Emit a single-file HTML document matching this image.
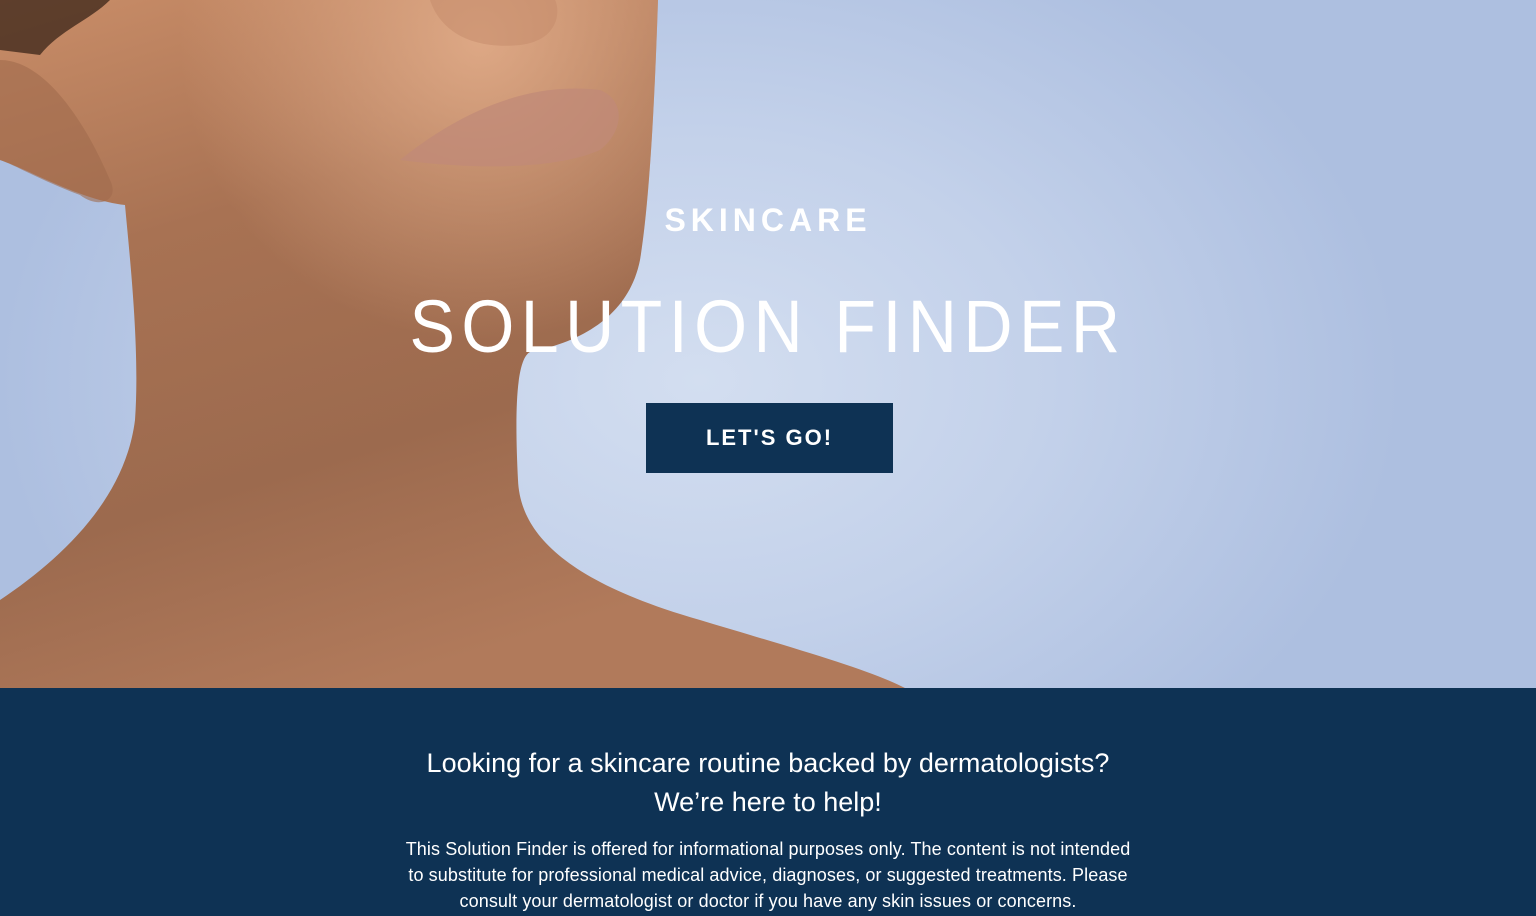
<!DOCTYPE html>
<html><head><meta charset="utf-8"><style>
html,body{margin:0;padding:0;width:1536px;height:916px;overflow:hidden;font-family:"Liberation Sans",sans-serif}
.hero{position:absolute;left:0;top:0;width:1536px;height:688px;background:radial-gradient(ellipse 700px 500px at 700px 380px,#d3def0 0%,#c3d1ea 50%,#adbfe0 100%)}
svg{position:absolute;left:0;top:0}
.t{position:absolute;left:0;width:1536px;text-align:center;color:#fff;white-space:nowrap}
.btn{position:absolute;left:646px;top:403px;width:247px;height:70px;background:#0e3254;color:#fff;font-weight:bold;font-size:22px;letter-spacing:2px;text-align:center;line-height:70px}
.band{position:absolute;left:0;top:688px;width:1536px;height:228px;background:#0e3254}
</style></head><body>
<div class="hero"></div>
<svg width="1536" height="688" viewBox="0 0 1536 688">
<defs>
<linearGradient id="sk" x1="0" y1="0" x2="0.4" y2="1">
<stop offset="0" stop-color="#c98d68"/><stop offset="0.35" stop-color="#a87253"/><stop offset="0.7" stop-color="#9c6a4e"/><stop offset="1" stop-color="#b17a5b"/></linearGradient>
<radialGradient id="hl" cx="480" cy="40" r="300" gradientUnits="userSpaceOnUse"><stop offset="0" stop-color="#e2ad8a" stop-opacity=".9"/><stop offset="1" stop-color="#e2ad8a" stop-opacity="0"/></radialGradient>
</defs>
<path d="M0 0 L658 0 C655 90 650 200 640 260 C630 310 590 340 530 352 C515 360 515 420 518 480 C520 530 560 580 700 620 C800 650 870 670 905 688 L0 688 L0 600 C60 560 125 500 135 420 C140 350 130 260 125 205 C80 200 30 170 0 160 Z" fill="url(#sk)"/>
<path d="M0 0 L658 0 C655 90 650 200 640 260 C630 310 590 340 530 352 L300 360 L0 160 Z" fill="url(#hl)"/>
<path d="M0 0 L110 0 C90 20 60 30 40 55 L0 50 Z" fill="#3a2418" opacity=".75"/>
<path d="M0 60 C40 60 80 110 110 180 C120 200 100 210 80 195 C40 180 15 165 0 160 Z" fill="#a06a4d" opacity=".6"/>
<path d="M400 160 C450 120 520 80 600 90 C625 100 625 130 600 150 C550 172 460 168 400 160 Z" fill="#c08a78" opacity=".75"/>
<path d="M430 0 C440 30 470 50 520 45 C560 40 560 10 555 0 Z" fill="#c48a6a" opacity=".5"/>
</svg>
<div class="t" style="top:202px;font-size:32px;font-weight:bold;letter-spacing:5px">SKINCARE</div>
<div class="t" style="top:284px;font-size:74px;letter-spacing:7px;transform:scaleX(0.92);transform-origin:768px 0">SOLUTION FINDER</div>
<div class="btn">LET'S GO!</div>
<div class="band"></div>
<div class="t" style="top:744px;font-size:27px;line-height:39px">Looking for a skincare routine backed by dermatologists?<br>We’re here to help!</div>
<div class="t" style="top:836px;font-size:18px;line-height:26px;letter-spacing:0.1px">This Solution Finder is offered for informational purposes only. The content is not intended<br>to substitute for professional medical advice, diagnoses, or suggested treatments. Please<br>consult your dermatologist or doctor if you have any skin issues or concerns.</div>
</body></html>
